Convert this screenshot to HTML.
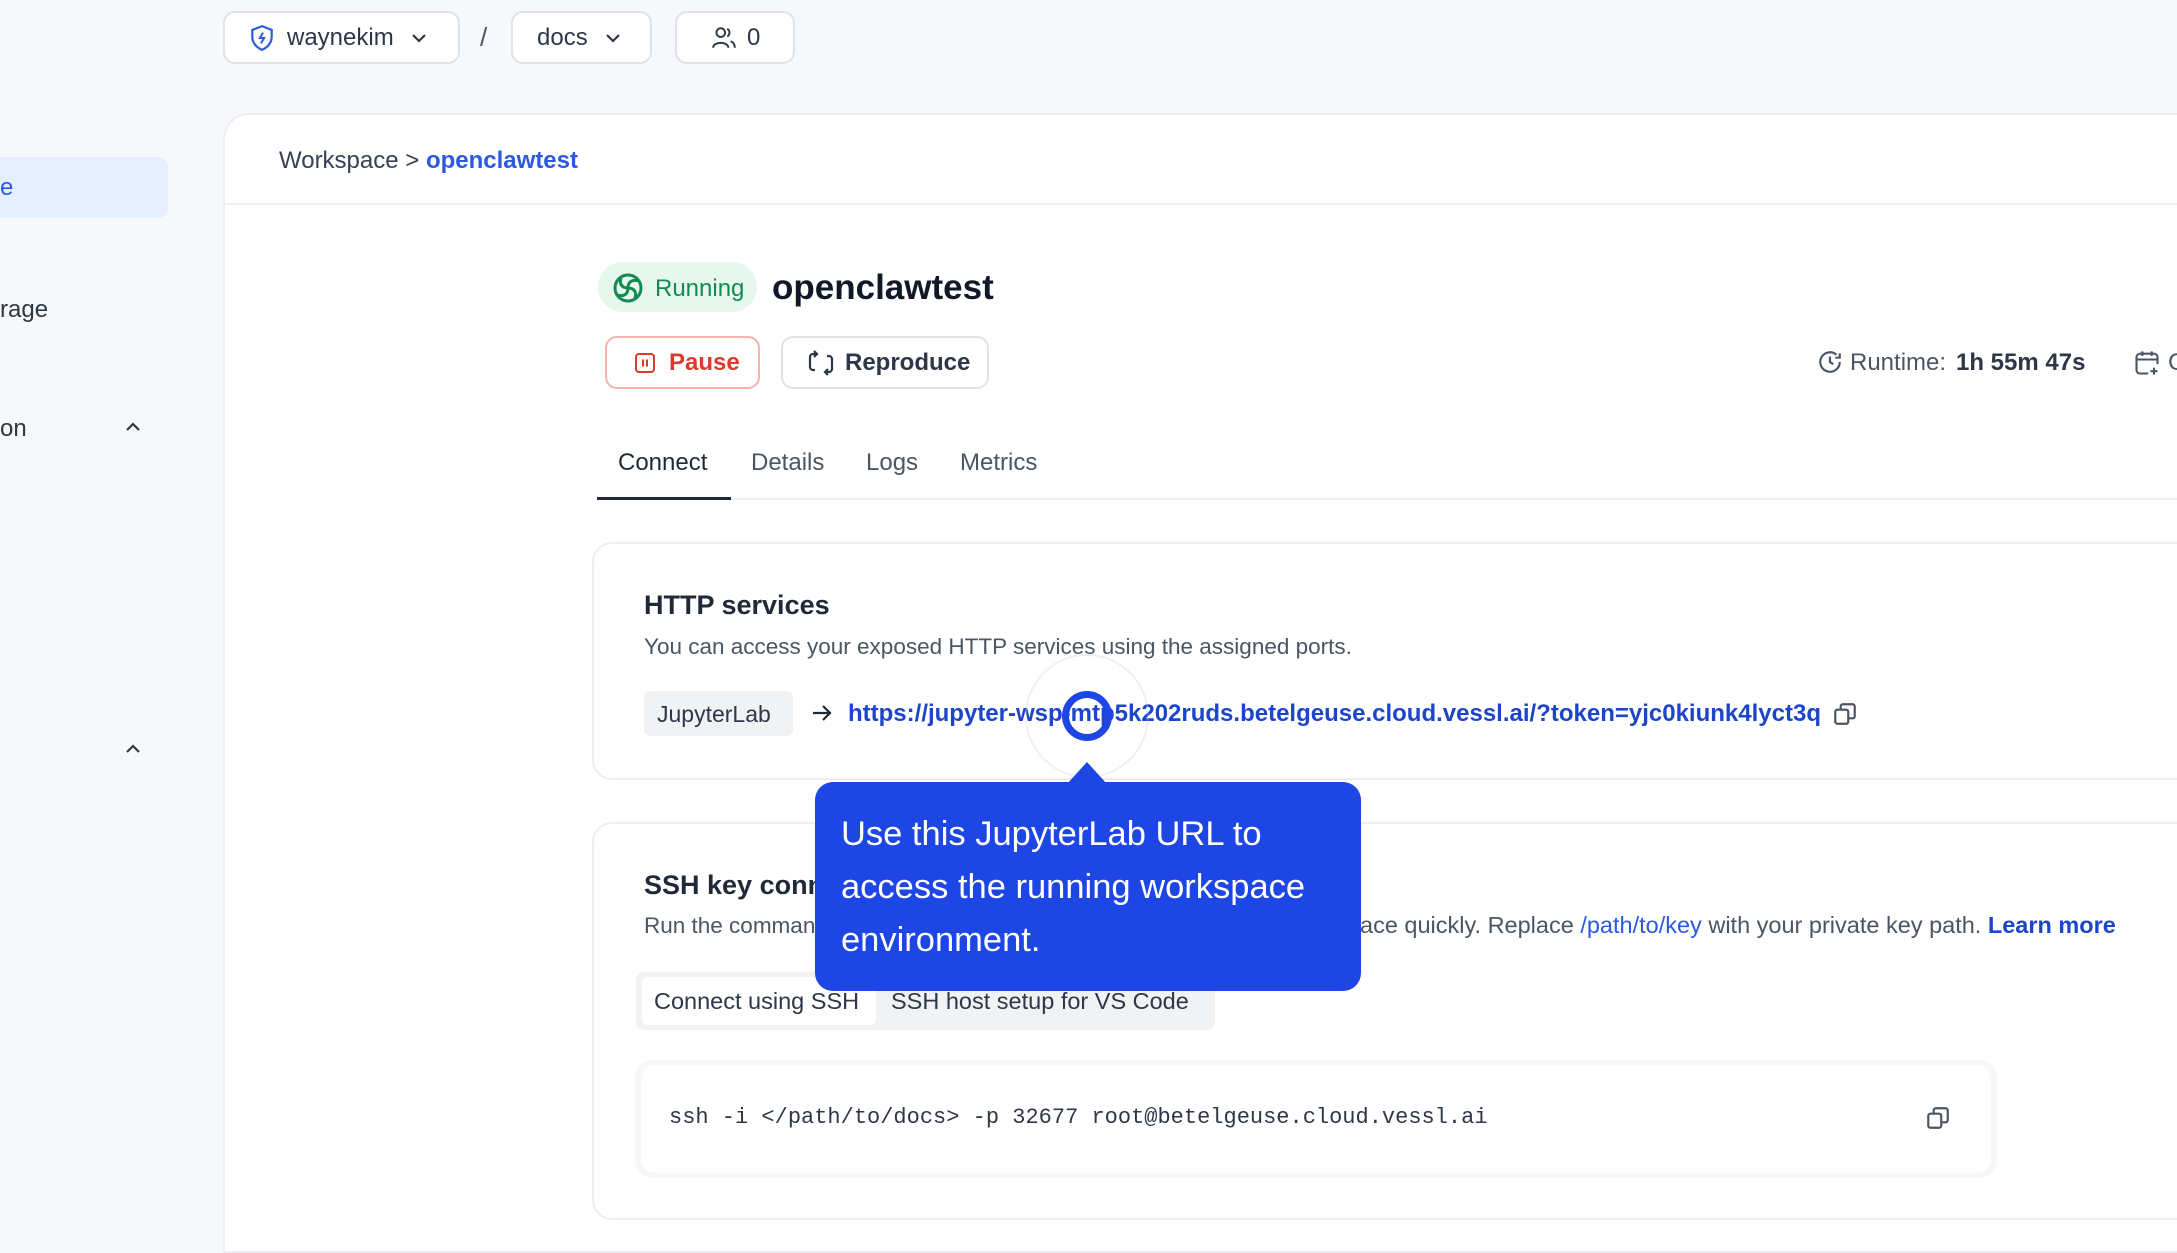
<!DOCTYPE html>
<html><head><meta charset="utf-8">
<style>
*{box-sizing:border-box;margin:0;padding:0}
body{width:2177px;height:1238px;overflow:hidden;background:#f7f8f9;font-family:"Liberation Sans",sans-serif;color:#1f2937;position:relative}
.a{position:absolute}
.btn{position:absolute;background:#fff;border:2px solid #dfe2e6;border-radius:12px;display:flex;align-items:center;font-size:24px;color:#2d3748}
.t{position:absolute;white-space:nowrap}
</style></head><body>
<div class="btn" style="left:223px;top:11px;width:237px;height:53px;padding-left:24px">
<svg width="26" height="28" viewBox="0 0 24 26" fill="none" stroke="#2b59e0" stroke-width="2"><path d="M12 2 L21 5.5 V12 C21 18 16.5 22 12 24 C7.5 22 3 18 3 12 V5.5 Z"/><path d="M13 8 L10 13 H14 L11 18" stroke-width="1.8"/></svg>
<span style="margin-left:12px">waynekim</span>
<svg style="margin-left:16px" width="18" height="12" viewBox="0 0 18 12" fill="none" stroke="#2d3748" stroke-width="2.2"><path d="M3 3 L9 9 L15 3"/></svg></div>
<div class="t" style="left:480px;top:22px;font-size:26px;color:#4a5568">/</div>
<div class="btn" style="left:511px;top:11px;width:141px;height:53px;padding-left:24px"><span>docs</span>
<svg style="margin-left:16px" width="18" height="12" viewBox="0 0 18 12" fill="none" stroke="#2d3748" stroke-width="2.2"><path d="M3 3 L9 9 L15 3"/></svg></div>
<div class="btn" style="left:675px;top:11px;width:120px;height:53px;padding-left:34px">
<svg width="26" height="26" viewBox="0 0 24 24" fill="none" stroke="#2d3748" stroke-width="1.8"><circle cx="9" cy="7" r="4"/><path d="M2 21 C2 15 16 15 16 21"/><path d="M15 3.5 A4 4 0 0 1 15 10.5"/><path d="M18 15 C21 16 22 18 22 21"/></svg>
<span style="margin-left:10px">0</span></div>
<div class="a" style="left:0;top:157px;width:168px;height:61px;background:#e6effd;border-radius:0 10px 10px 0"></div>
<div class="t" style="left:0;top:174px;font-size:24px;color:#2b59e0">e</div>
<div class="t" style="left:0;top:296px;font-size:24px;color:#2d3748">rage</div>
<div class="t" style="left:0;top:415px;font-size:24px;color:#2d3748">on</div>
<svg class="a" style="left:124px;top:421px" width="18" height="12" viewBox="0 0 18 12" fill="none" stroke="#2d3748" stroke-width="2.2"><path d="M3 9 L9 3 L15 9"/></svg>
<svg class="a" style="left:124px;top:743px" width="18" height="12" viewBox="0 0 18 12" fill="none" stroke="#2d3748" stroke-width="2.2"><path d="M3 9 L9 3 L15 9"/></svg>
<div class="a" style="left:223px;top:113px;width:2000px;height:1140px;background:#fff;border:2px solid #eceef1;border-radius:26px 0 0 0"></div>
<div class="a" style="left:225px;top:203px;width:1952px;height:2px;background:#eceef1"></div>
<div class="t" style="left:279px;top:147px;font-size:24px;color:#374151">Workspace &gt; <span style="color:#2b59e0;font-weight:bold">openclawtest</span></div>
<div class="a" style="left:598px;top:262px;width:159px;height:50px;background:#e6f7ee;border-radius:25px"></div>
<svg class="a" style="left:612px;top:272px" width="32" height="32" viewBox="0 0 32 32" fill="none" stroke="#138a52" stroke-width="3"><circle cx="16" cy="16" r="13"/><path d="M16 16 C10 16 7 12 9 6"/><path d="M16 16 C16 10 20 7 26 9"/><path d="M16 16 C22 16 25 20 23 26"/><path d="M16 16 C16 22 12 25 6 23"/></svg>
<div class="t" style="left:655px;top:275px;font-size:24px;color:#138a52">Running</div>
<div class="t" style="left:772px;top:268px;font-size:35px;font-weight:bold;color:#111827">openclawtest</div>
<div class="btn" style="left:605px;top:336px;width:155px;height:53px;border-color:#f5b3ad;padding-left:26px;color:#dc3a2c;font-weight:bold">
<svg width="24" height="24" viewBox="0 0 24 24" fill="none" stroke="#dc3a2c" stroke-width="2"><rect x="3" y="3" width="18" height="18" rx="3"/><path d="M10 8.5 V15.5 M14 8.5 V15.5"/></svg>
<span style="margin-left:12px">Pause</span></div>
<div class="btn" style="left:781px;top:336px;width:208px;height:53px;padding-left:24px;font-weight:bold">
<svg width="28" height="26" viewBox="0 0 28 26" fill="none" stroke="#2d3748" stroke-width="2.2"><path d="M10 4 H6 A3 3 0 0 0 3 7 V17 A3 3 0 0 0 6 20 H8"/><path d="M7 1 L10 4 L7 7"/><path d="M18 22 H22 A3 3 0 0 0 25 19 V9 A3 3 0 0 0 22 6 H20"/><path d="M21 25 L18 22 L21 19"/></svg>
<span style="margin-left:10px">Reproduce</span></div>
<svg class="a" style="left:1817px;top:349px" width="26" height="26" viewBox="0 0 24 24" fill="none" stroke="#4b5563" stroke-width="2"><path d="M21 12 A9 9 0 1 1 18 5.3"/><path d="M12 7 V12 L15 14"/><path d="M21 4 V8 H17"/></svg>
<div class="t" style="left:1850px;top:349px;font-size:24px;color:#4b5563">Runtime:</div>
<div class="t" style="left:1956px;top:349px;font-size:24px;color:#2d3748;font-weight:bold">1h 55m 47s</div>
<svg class="a" style="left:2133px;top:349px" width="28" height="28" viewBox="0 0 24 24" fill="none" stroke="#4b5563" stroke-width="1.8"><path d="M13 21 H6 A3 3 0 0 1 3 18 V7 A3 3 0 0 1 6 4 H18 A3 3 0 0 1 21 7 V13"/><path d="M3 9 H21 M8 2 V6 M16 2 V6 M18 16 V22 M15 19 H21"/></svg>
<div class="t" style="left:2168px;top:349px;font-size:24px;color:#4b5563">C</div>
<div class="a" style="left:597px;top:498px;width:1580px;height:2px;background:#eceef1"></div>
<div class="a" style="left:597px;top:497px;width:134px;height:3px;background:#1f2937"></div>
<div class="t" style="left:618px;top:449px;font-size:24px;color:#1f2937">Connect</div>
<div class="t" style="left:751px;top:449px;font-size:24px;color:#4b5563">Details</div>
<div class="t" style="left:866px;top:449px;font-size:24px;color:#4b5563">Logs</div>
<div class="t" style="left:960px;top:449px;font-size:24px;color:#4b5563">Metrics</div>
<div class="a" style="left:592px;top:542px;width:1620px;height:238px;border:2px solid #eceef1;border-radius:20px"></div>
<div class="t" style="left:644px;top:590px;font-size:27px;font-weight:bold;color:#1f2937">HTTP services</div>
<div class="t" style="left:644px;top:634px;font-size:22.5px;color:#4b5563">You can access your exposed HTTP services using the assigned ports.</div>
<div class="a" style="left:644px;top:691px;width:149px;height:45px;background:#f1f2f4;border-radius:6px"></div>
<div class="t" style="left:657px;top:701px;font-size:23px;color:#2d3748">JupyterLab</div>
<svg class="a" style="left:810px;top:701px" width="24" height="24" viewBox="0 0 24 24" fill="none" stroke="#1f2937" stroke-width="2.2"><path d="M3 12 H20 M13 5 L20 12 L13 19"/></svg>
<div class="t" style="left:848px;top:700px;font-size:24px;color:#1d45c9;font-weight:bold">https://jupyter-wsp-mtp5k202ruds.betelgeuse.cloud.vessl.ai/?token=yjc0kiunk4lyct3q</div>
<svg class="a" style="left:1832px;top:701px" width="26" height="26" viewBox="0 0 24 24" fill="none" stroke="#4b5563" stroke-width="2"><rect x="3" y="8" width="12" height="13" rx="2"/><path d="M8 8 V5 A2 2 0 0 1 10 3 H19 A2 2 0 0 1 21 5 V14 A2 2 0 0 1 19 16 H15"/></svg>
<div class="a" style="left:592px;top:822px;width:1620px;height:398px;border:2px solid #eceef1;border-radius:20px"></div>
<div class="t" style="left:644px;top:870px;font-size:27px;font-weight:bold;color:#1f2937">SSH key conn</div>
<div class="t" style="left:644px;top:913px;font-size:22.5px;color:#4b5563">Run the comman</div>
<div class="t" style="left:1360px;top:912px;font-size:23.5px;color:#4b5563">ace quickly. Replace <span style="color:#2b59e0">/path/to/key</span> with your private key path. <span style="color:#1d45c9;font-weight:bold">Learn more</span></div>
<div class="a" style="left:636px;top:972px;width:579px;height:58px;background:#f1f2f4;border-radius:8px"></div>
<div class="a" style="left:642px;top:977px;width:234px;height:48px;background:#fff;border-radius:6px"></div>
<div class="t" style="left:654px;top:988px;font-size:23.5px;color:#2d3748">Connect using SSH</div>
<div class="t" style="left:891px;top:988px;font-size:23.5px;color:#2d3748">SSH host setup for VS Code</div>
<div class="a" style="left:635px;top:1060px;width:1362px;height:118px;background:#f6f7f8;border-radius:18px"></div>
<div class="a" style="left:641px;top:1065px;width:1350px;height:108px;background:#fff;border-radius:14px"></div>
<div class="t" style="left:669px;top:1105px;font-size:22px;font-family:'Liberation Mono',monospace;color:#2d3748">ssh -i &lt;/path/to/docs&gt; -p 32677 root@betelgeuse.cloud.vessl.ai</div>
<svg class="a" style="left:1925px;top:1105px" width="26" height="26" viewBox="0 0 24 24" fill="none" stroke="#4b5563" stroke-width="2"><rect x="3" y="8" width="12" height="13" rx="2"/><path d="M8 8 V5 A2 2 0 0 1 10 3 H19 A2 2 0 0 1 21 5 V14 A2 2 0 0 1 19 16 H15"/></svg>
<div class="a" style="left:1025px;top:654px;width:124px;height:124px;border-radius:50%;border:2px solid rgba(200,205,215,0.3)"></div>
<div class="a" style="left:1062px;top:691px;width:50px;height:50px;border-radius:50%;border:7px solid #1d46e5"></div>
<svg class="a" style="left:1067px;top:760px" width="40" height="24" viewBox="0 0 40 24"><path d="M0 24 L20 2 L40 24 Z" fill="#1d46e5"/></svg>
<div class="a" style="left:815px;top:782px;width:546px;height:209px;background:#1d46e5;border-radius:18px;color:#fff;font-size:34.5px;line-height:53px;padding:26px 0 0 26px">Use this JupyterLab URL to<br>access the running workspace<br>environment.</div>
</body></html>
